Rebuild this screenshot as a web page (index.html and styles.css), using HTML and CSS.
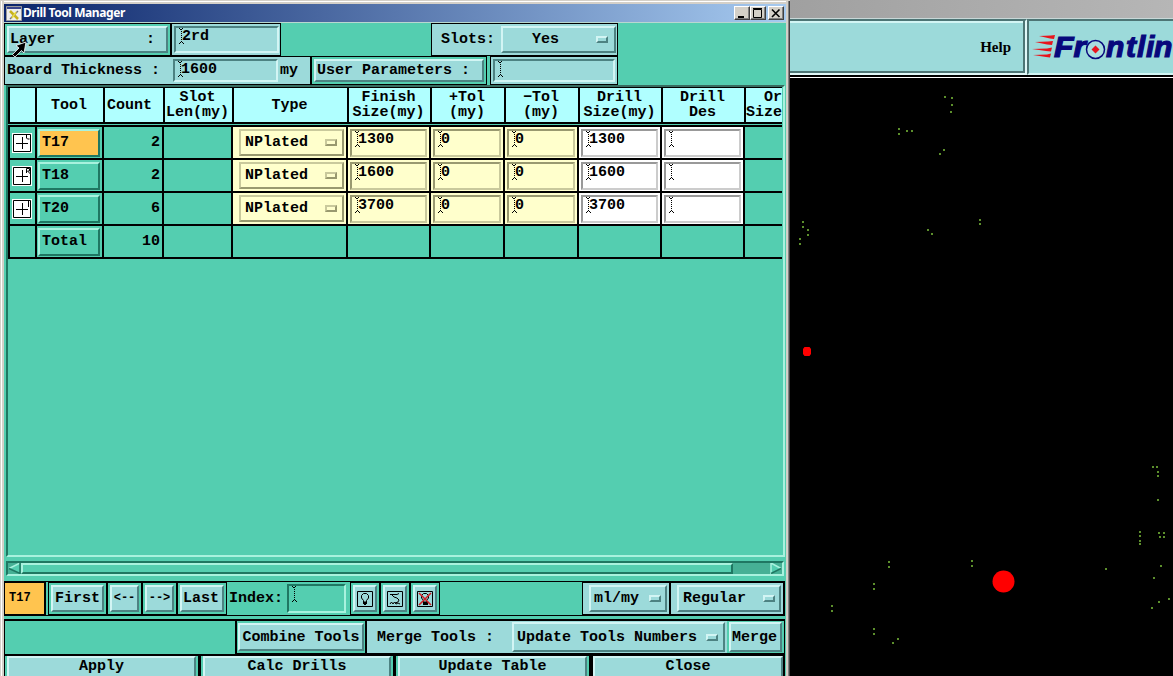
FILE: index.html
```
<!DOCTYPE html>
<html lang="en">
<head>
<meta charset="utf-8">
<title>Drill Tool Manager</title>
<link rel="stylesheet" href="styles.css">
</head>
<body>
<svg class="defs" width="0" height="0">
  <symbol id="caret" viewBox="0 0 5 16"><path d="M.5 0v1M3.500 0v1M1.500 1v1M2.500 1v1M2.500 3v1M2.500 5v1M2.500 7v1M2.500 9v1M2.500 11v1M2.500 13v1M1.500 14v1M3.500 14v1M.5 15v1M4.500 15v1" stroke="#000" fill="none"/></symbol>
</svg>
<div class="screen">
<main class="dialog">
  <header class="titlebar">
    <svg class="appicon" width="16" height="15" viewBox="0 0 16 15"><path fill="#eee" stroke="#999" d="M.5.5h15v14H.5z"/><path fill="#38458c" d="M1 1h14v2H1z"/><path stroke="#c7b21c" stroke-width="2.500" d="M4 5l8 8"/><path stroke="#777" stroke-width="1.500" d="M12 5l-8 8"/><path stroke="#efe03c" stroke-width="1.500" d="M10 6l-4 6"/></svg>
    <span class="caption">Drill Tool Manager</span>
    <span class="winbtn"><svg width="14" height="12"><path fill="#000" d="M3 9h6v2H3z"/></svg></span>
    <span class="winbtn"><svg width="14" height="12"><path fill="none" stroke="#000" d="M2.500 2.500h8v8h-8zM2 1.500h9"/></svg></span>
    <span class="winbtn close"><svg width="14" height="12"><path stroke="#000" stroke-width="1.600" d="M3 2.500l7.500 7.500M10.500 2.500L3 10"/></svg></span>
  </header>

  <section class="row r1">
    <div class="box layer"><button class="btn"><span>Layer</span><span>:</span></button></div>
    <div class="box pale layer-val"><div class="field"><svg><use href="#caret"/></svg>2rd</div></div>
    <div class="box pale slots"><span>Slots:</span><button class="btn opt"><span>Yes</span><i></i></button></div>
  </section>
  <section class="row r2">
    <div class="box pale board"><span>Board Thickness :</span><div class="field"><svg><use href="#caret"/></svg>1600</div><span>my</span></div>
    <div class="box params"><button class="btn">User Parameters :</button></div>
    <div class="box pale params-val"><div class="field"><svg><use href="#caret"/></svg></div></div>
  </section>

  <section class="viewport">
    <div class="grid head">
      <div></div><div class="tl">Tool</div><div class="l">Count</div><div>Slot<br>Len(my)</div><div>Type</div><div>Finish<br>Size(my)</div><div>+Tol<br>(my)</div><div>−Tol<br>(my)</div><div>Drill<br>Size(my)</div><div>Drill<br>Des</div><div class="last">Or<br>Size</div>
    </div>
    <div class="body">
    <div class="grid data">
      <div><svg class="plus" width="20" height="20"><path d="M0 0h20v20H0z" fill="#fff"/><path d="M1.500 1.500h17v17h-17zM4 10.500h12M10.500 4v12M14.500 1v4l1 1h2" fill="none" stroke="#000"/></svg></div>
      <div><button class="tool on">T17</button></div><div class="num">2</div><div></div>
      <div class="y"><button class="kind">NPlated<i></i></button></div>
      <div class="y"><p><svg><use href="#caret"/></svg>1300</p></div><div class="y"><p><svg><use href="#caret"/></svg>0</p></div><div class="y"><p><svg><use href="#caret"/></svg>0</p></div>
      <div class="w"><p><svg><use href="#caret"/></svg>1300</p></div><div class="w"><p><svg><use href="#caret"/></svg></p></div><div></div>
    </div>
    <div class="grid data">
      <div><svg class="plus" width="20" height="20"><path d="M0 0h20v20H0z" fill="#fff"/><path d="M1.500 1.500h17v17h-17zM4 10.500h12M10.500 4v12M14.500 7V2.500h3v2.500h-2l3 3" fill="none" stroke="#000"/></svg></div>
      <div><button class="tool">T18</button></div><div class="num">2</div><div></div>
      <div class="y"><button class="kind">NPlated<i></i></button></div>
      <div class="y"><p><svg><use href="#caret"/></svg>1600</p></div><div class="y"><p><svg><use href="#caret"/></svg>0</p></div><div class="y"><p><svg><use href="#caret"/></svg>0</p></div>
      <div class="w"><p><svg><use href="#caret"/></svg>1600</p></div><div class="w"><p><svg><use href="#caret"/></svg></p></div><div></div>
    </div>
    <div class="grid data">
      <div><svg class="plus" width="20" height="20"><path d="M0 0h20v20H0z" fill="#fff"/><path d="M1.500 1.500h17v17h-17zM4 10.500h12M10.500 4v12M16.500 1v7" fill="none" stroke="#000"/></svg></div>
      <div><button class="tool">T20</button></div><div class="num">6</div><div></div>
      <div class="y"><button class="kind">NPlated<i></i></button></div>
      <div class="y"><p><svg><use href="#caret"/></svg>3700</p></div><div class="y"><p><svg><use href="#caret"/></svg>0</p></div><div class="y"><p><svg><use href="#caret"/></svg>0</p></div>
      <div class="w"><p><svg><use href="#caret"/></svg>3700</p></div><div class="w"><p><svg><use href="#caret"/></svg></p></div><div></div>
    </div>
    <div class="grid data">
      <div></div><div><button class="tool">Total</button></div><div class="num">10</div><div></div><div></div><div></div><div></div><div></div><div></div><div></div><div></div>
    </div>
    </div>
  </section>

  <div class="scroll">
    <svg width="13" height="11"><path d="M12 0L1 5.500 12 11z" fill="#54ceb0"/><path d="M12 0L1 5.500" stroke="#a8f2de" stroke-width="1.500"/><path d="M1 5.500L12 10.500V0" fill="none" stroke="#1f7762" stroke-width="1.500"/></svg>
    <div class="thumb"></div>
    <svg class="right" width="12" height="11"><path d="M1 0v11l10-5.500z" fill="#54ceb0"/><path d="M1 11V0l10 5.500" fill="none" stroke="#a8f2de" stroke-width="1.500"/><path d="M1 10.500L11 5.500" stroke="#1f7762" stroke-width="1.500"/></svg>
  </div>

  <section class="nav">
    <div class="current">T17</div>
    <div class="box first"><button class="btn">First</button></div>
    <div class="box arrow"><button class="btn">&lt;--</button></div>
    <div class="box arrow"><button class="btn">--&gt;</button></div>
    <div class="box lastbtn"><button class="btn">Last</button></div>
    <span class="index">Index:</span>
    <div class="field idx"><svg><use href="#caret"/></svg></div>
    <div class="box ico"><button class="btn"><svg width="16" height="16"><path fill="none" stroke="#000" d="M.5.5h15v15H.5zM6.500 11V9.500L4.500 7V4.500l2-2h3l2 2V7l-2 2.500V11z"/><path d="M6 11h4v2H9v1H7v-1H6z"/></svg></button></div>
    <div class="box ico"><button class="btn"><svg width="16" height="16"><path fill="none" stroke="#000" d="M.5.5h15v15H.5zM3 3.500h7l2-1M5 4l2 2 3 1 2 2-1 2-3 1M3 13l1.500-2L6 13l1.500-2L9 13l2-1 2 1"/></svg></button></div>
    <div class="box ico"><button class="btn"><svg width="16" height="16"><path fill="none" stroke="#000" d="M.5.500h15v15H.5zM6.500 11V9.500L4.500 7V4.500l2-2h3l2 2V7l-2 2.500V11z"/><path d="M6 11h5v3H6z"/><path stroke="#d02028" stroke-width="1.600" d="M2 2l12 12M14 2L2 14"/></svg></button></div>
    <div class="box pale units"><button class="btn opt"><span>ml/my</span><i></i></button></div>
    <div class="box pale regular"><button class="btn opt"><span>Regular</span><i></i></button></div>
  </section>

  <section class="merge">
    <div class="box combine"><button class="btn">Combine Tools</button></div>
    <div class="box pale mergetools"><span>Merge Tools :</span><button class="btn opt"><span>Update Tools Numbers</span><i></i></button></div>
    <div class="box mergebtn"><button class="btn">Merge</button></div>
  </section>

  <footer class="actions">
    <div><button class="btn">Apply</button></div><div><button class="btn">Calc Drills</button></div><div><button class="btn">Update Table</button></div><div class="def"><button class="btn">Close</button></div>
  </footer>
  <svg class="pointer" width="18" height="18"><path d="M15 1L13 12 10.500 9.500 4 16 1.500 13.500 8 7 5 4.500z" fill="#000" stroke="#fff" stroke-width=".8"/></svg>
</main>

<aside class="app">
  <div class="strip"></div>
  <div class="menubar">
    <div class="menu">Help</div>
    <div class="logo">
      <svg width="144" height="48" viewBox="1029 23 144 48">
        <path fill="#e8141c" d="M1039 36l12-.5 4-.5-1 4-4-.5zM1035 42l13-.5 5-.5-1 4-5-.5zM1032 49l15-.5 5-1-1 4-5-.5zM1033 55l14-.5 4-1-1 4-4-.5z"/>
        <g class="brand"><text x="1054" y="57" textLength="32" lengthAdjust="spacingAndGlyphs">Fr</text><text x="1106" y="57">n</text><text x="1126" y="57">t</text><text x="1137" y="57">l</text><text x="1146" y="57">i</text><text x="1154" y="57">n</text></g>
        <circle cx="1095.500" cy="49.500" r="9" fill="#a9dede" stroke="#08087c" stroke-width="1.500"/>
        <path fill="#e8141c" d="M1095.500 45.500l4 4-4 4-4-4z"/>
      </svg>
    </div>
  </div>
  <svg class="board-view" width="383" height="598">
    <g transform="translate(-5 2) scale(.33333)" class="holes"><path d="M480 51h0M501 54h0M501 75h0M498 96h0M342 147h0M342 162h0M366 153h0M381 153h0M477 210h0M465 222h0M54 426h0M54 441h0M69 450h0M69 465h0M45 477h0M45 492h0M429 450h0M441 462h0M585 420h0M585 432h0"/></g>
    <g transform="translate(-5 362) scale(.33333)" class="holes"><path d="M1104 81h0M1116 81h0M1119 96h0M1119 108h0M1119 180h0M1065 276h0M1065 288h0M1065 303h0M1065 312h0M1122 279h0M1137 279h0M1125 291h0M1137 291h0M1128 378h0M1107 414h0M1152 477h0M1122 486h0M1101 504h0M963 387h0M561 363h0M561 378h0M312 366h0M312 381h0M267 432h0M267 447h0M141 498h0M141 513h0M267 567h0M267 582h0M339 597h0M324 609h0"/></g>
    <path fill="red" d="M14.500 269h5l1.500 2v5L19.500 278h-5l-1.500-2v-5z"/>
    <circle cx="213.500" cy="503.500" r="11" fill="red"/>
  </svg>
</aside>
</div>
</body>
</html>
```
FILE: styles.css
```
* { box-sizing: border-box; }
:root {
  --green: #54ceb0;
  --pale: #9cdada;
  --hi: #d2f5f4;
  --lo: #4d8282;
  --ghi: #a8f2de;
  --glo: #1f7762;
}
body { margin: 0; background: #000; overflow: hidden; }
.defs { position: absolute; }
.screen { display: flex; width: 1173px; height: 676px; overflow: hidden; }
button { font: inherit; color: inherit; margin: 0; padding: 0; border-radius: 0; }

.dialog {
  position: relative;
  width: 790px; height: 676px; flex: none; overflow: hidden;
  display: flex; flex-direction: column;
  padding: 4px 4px 0 4px;
  font: bold 15px/15px "Liberation Mono", monospace;
  color: #000;
  background: linear-gradient(#d4d0c8, #d4d0c8) 0 0 / 100% 1px no-repeat,
    linear-gradient(90deg, #d4d0c8 1px, #fff 1px, #fff 2px, #d4d0c8 2px, #d4d0c8 4px, var(--green) 4px, var(--green) 786px, #d4d0c8 786px, #d4d0c8 788px, #808080 788px, #808080 789px, #404040 789px);
}
.titlebar {
  height: 19px; flex: none; display: flex; align-items: center;
  padding: 0 2px;
  background: linear-gradient(90deg, #0a246a, #a6caf0);
  border-bottom: 1px solid #b8d8d0;
  box-shadow: 0 -2px #d4d0c8, 0 -3px #fff;
}
.caption { color: #fff; font: bold 12px/16px "Noto Sans", sans-serif; letter-spacing: -.42px; margin: 0 auto 0 1px; white-space: nowrap; }
.winbtn {
  width: 16px; height: 14px; background: #d4d0c8; border: 1px solid;
  border-color: #fff #404040 #404040 #fff; box-shadow: inset -1px -1px #808080;
}
.winbtn svg { display: block; }
.winbtn.close { margin-left: 2px; }

.row { display: flex; flex: none; }
.r1 { height: 33px; }
.r2 { height: 29px; }
.box { border: 1px solid #000; background: var(--green); display: flex; align-items: center; padding: 2px; }
.pale { background: var(--pale); }
.btn {
  flex: 1; align-self: stretch; display: flex; align-items: center; justify-content: center;
  background: var(--pale); border: 2px solid; border-color: var(--hi) var(--lo) var(--lo) var(--hi);
  white-space: pre;
}
.field {
  align-self: stretch; background: var(--pale); border: 2px solid;
  border-color: var(--lo) var(--hi) var(--hi) var(--lo);
  display: flex; align-items: flex-start; padding-left: 3px; line-height: 18px;
}
.field svg, p svg { width: 5px; height: 16px; flex: none; margin-right: -2px; }
.opt i, .kind i { width: 12px; height: 7px; border: 2px solid; border-color: var(--hi) var(--lo) var(--lo) var(--hi); background: var(--pale); }
.opt { justify-content: space-between; }

.layer { width: 168px; border-right-width: 2px; }
.layer .btn { justify-content: space-between; padding: 0 11px 0 1px; }
.layer-val { width: 109px; border-left: 0; padding: 2px 1px 2px 2px; }
.layer-val .field { flex: 1; }
.slots { width: 187px; margin-left: 150px; padding-left: 9px; }
.slots .btn { flex: none; width: 115px; margin-left: 6px; padding: 0 6px 0 29px; }
.board { width: 308px; border-right-width: 2px; padding-left: 2px; }
.board .field { width: 105px; margin: 0 2px 0 13px; }
.params { width: 175px; border-left: 0; padding: 2px; }
.params .btn { justify-content: flex-start; padding-left: 1px; }
.params-val { width: 128px; margin-left: 3px; }
.params-val .field { flex: 1; }
.r1 .box { height: 33px; }

.viewport {
  height: 472px; flex: none; margin: 0 1px 0 2px; overflow: hidden;
  border: 2px solid; border-color: #386c60 var(--ghi) var(--ghi) var(--glo);
}
.grid { display: grid; margin-right: 1px; }
.grid > div { border-left: 2px solid #000; display: flex; align-items: center; overflow: hidden; }
.head { grid-template-columns: 27px 68px 60px 69px 115px 83px 74px 74px 83px 83px 38px; height: 37px; background: #b0ffff; border-top: 1px solid #000; border-bottom: 2px solid #000; }
.head > div { justify-content: center; text-align: center; white-space: nowrap; padding-right: 2px; }
.head > .l { justify-content: flex-start; padding-left: 2px; text-align: left; }
.head > .last { padding: 0; justify-content: flex-end; text-align: right; }
.body { border-top: 2px solid #000; margin-top: 1px; margin-right: 1px; }
.body .grid { margin-right: 0; }
.data { grid-template-columns: 27px 67px 60px 69px 115px 83px 74px 74px 83px 83px 39px; height: 33px; border-bottom: 2px solid #000; }
.plus { margin-left: 2px; }
.tool { width: 62px; height: 28px; margin-left: 1px; text-align: left; padding-left: 2px; background: var(--green); border: 2px solid; border-color: var(--ghi) var(--glo) var(--glo) var(--ghi); }
.tool.on { background: #ffc44f; }
.data .num { justify-content: flex-end; padding-right: 2px; }
.y { background: #ffffcc; }
.w { background: #fff; }
.kind { width: 105px; height: 27px; margin-left: 6px; padding: 0 5px 0 4px; background: #ffffcc; border: 2px solid; border-color: #c9c99c #99996f #99996f #c9c99c; display: flex; align-items: center; justify-content: space-between; }
.kind i { border-color: #c9c99c #99996f #99996f #c9c99c; background: #ffffcc; }
.data p { flex: 1; height: 28px; margin: 0 2px; padding: 0 0 0 3px; border: 2px solid; border-color: #999970 #c9c99c #c9c99c #999970; display: flex; line-height: 17px; }
.data .w p { border-color: #999 #ccc #ccc #999; }

.scroll {
  height: 15px; flex: none; margin: 4px 2px 5px; display: flex; align-items: center;
  background: #46b095; border: 2px solid; border-color: var(--glo) var(--ghi) var(--ghi) var(--glo);
}
.thumb { width: 712px; height: 11px; background: var(--green); border: 2px solid; border-color: var(--ghi) var(--glo) var(--glo) var(--ghi); }
.scroll .right { margin-left: auto; }

.nav { height: 35px; flex: none; display: flex; align-items: stretch; border: 1px solid #000; border-right-width: 2px; margin-right: 1px; }
.nav .box { border-width: 1px; padding: 2px; }
.current { width: 41px; background: #ffc44f; border: solid #000; border-width: 1px 2px 1px 0; font-size: 12px; line-height: 31px; padding-left: 4px; margin-right: 2px; }
.first { width: 59px; }
.arrow { width: 35px; }
.arrow .btn { font-size: 12px; }
.lastbtn { width: 50px; }
.lastbtn .btn { justify-content: flex-start; padding-left: 1px; }
.index { line-height: 33px; padding-left: 2px; width: 60px; }
.idx { width: 59px; margin: 2px 4px 2px 0; background: var(--green); border-color: var(--glo) var(--ghi) var(--ghi) var(--glo); }
.ico { width: 30px; }
.units { width: 88px; margin-left: auto; }
.nav .units { padding-left: 6px; }
.units .btn { padding: 0 4px 0 3px; }
.regular { width: 113px; }
.nav .regular { padding-left: 6px; border-right: 0; }
.regular .btn { padding: 0 4px 0 4px; }

.merge { height: 36px; flex: none; display: flex; margin: 3px 1px 0 0; border: solid #000; border-width: 2px 1px 1px; }
.combine { width: 132px; margin-left: 230px; border-width: 0 2px 1px 2px; padding: 2px 1px; }
.mergetools { flex: 1; border-width: 0 0 1px; padding: 1px 2px 1px 10px; }
.mergetools .btn { flex: none; width: 213px; margin-left: auto; padding: 0 5px 0 3px; }
.mergebtn { width: 57px; border-width: 0 0 1px; padding: 1px 2px; }
.mergebtn .btn { justify-content: flex-start; padding-left: 1px; }

.actions { height: 22px; flex: none; display: grid; grid-template-columns: 196px 195px 196px 194px; margin-right: 1px; }
.actions > div { display: flex; height: 22px; padding: 0 2px; border: solid #000; border-width: 1px 2px 0 1px; }
.actions .btn { border-bottom: 0; align-items: flex-start; padding: 1px 0 0; }
.actions .def { background: #000; padding: 0 0 0 1px; }
.pointer { position: absolute; left: 11px; top: 41px; }

.app { flex: 1; background: #000; overflow: hidden; }
.strip { height: 19px; background: linear-gradient(90deg, #a0a0a0, #b6b6b6); border-bottom: 1px solid #c8d8d8; }
.menubar { height: 59px; display: flex; border-bottom: 1px solid #fff; background: #000; padding-bottom: 2px; }
.menu {
  width: 237px; background: var(--pale); border: solid; border-width: 2px 2px 2px 0; border-color: #4d7575 #e0f8f8 #e0f8f8;
  box-shadow: inset -2px -2px #4d7575, inset 0 2px #d2f5f4;
  display: flex; align-items: center; justify-content: flex-end; padding-right: 14px;
  font: bold 15px/18px "Liberation Serif", serif;
}
.logo { width: 146px; background: var(--pale); border: solid; border-width: 2px 0 2px 2px; border-color: #4d7575 #fff #d2f5f4 #4d7575; overflow: hidden; }
.logo svg { display: block; margin-top: 2px; }
.brand { font: italic bold 30px "Liberation Sans", sans-serif; fill: #08087c; stroke: #08087c; stroke-width: 1.200; }
.board-view { display: block; }
.holes { fill: none; stroke: #5c8f2c; stroke-width: 6; stroke-linecap: square; shape-rendering: crispEdges; }
```
